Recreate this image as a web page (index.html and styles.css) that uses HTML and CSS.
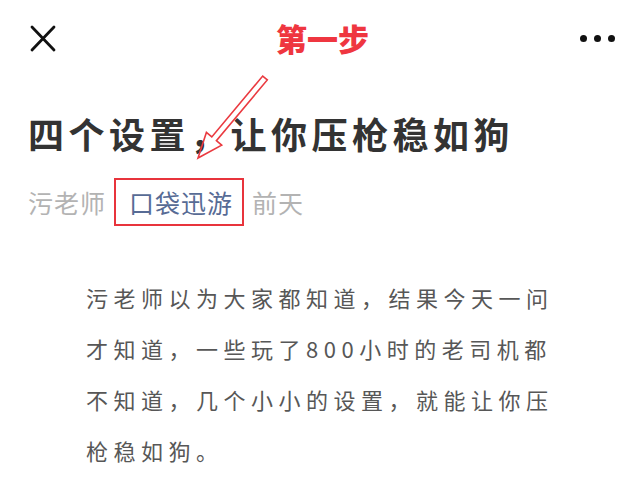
FILE: index.html
```html
<!DOCTYPE html>
<html lang="zh-CN">
<head>
<meta charset="utf-8">
<title>四个设置，让你压枪稳如狗</title>
<link rel="stylesheet" href="styles.css">
</head>
<body>
<div class="page">
  <header class="topbar">
    <div class="close">
      <svg width="26" height="27" viewBox="0 0 26 27" aria-hidden="true">
        <path d="M2 2 L24 25 M24 2 L2 25" stroke="#111" stroke-width="2.8" stroke-linecap="round" fill="none"/>
      </svg>
    </div>
    <div class="step">第一步</div>
    <div class="more"><span class="dot"></span><span class="dot"></span><span class="dot"></span></div>
  </header>
  <article class="article">
    <h1 class="title">四个设置，让你压枪稳如狗</h1>
    <div class="meta">
      <span class="author">污老师</span>
      <span class="account">口袋迅游</span>
      <span class="time">前天</span>
    </div>
    <p class="body-text">污老师以为大家都知道，结果今天一问才知道，一些玩了800小时的老司机都不知道，几个小小的设置，就能让你压枪稳如狗。</p>
  </article>
  <svg class="arrow" width="640" height="499" viewBox="0 0 640 499" aria-hidden="true">
    <polygon points="262.7,76.1 267.3,79.9 216.4,140.7 221.7,145.2 198,158 206.4,132.4 211.8,136.9" fill="none" stroke="#ea3a40" stroke-width="1.6" stroke-linejoin="miter"/>
  </svg>
</div>
</body>
</html>
```

FILE: styles.css
```css
html, body {
  margin: 0;
  padding: 0;
  background: #ffffff;
}
body {
  font-family: "Noto Sans CJK SC", "Noto Sans", sans-serif;
}
.page {
  position: relative;
  width: 640px;
  height: 499px;
  overflow: hidden;
}
.topbar {
  height: 76px;
  display: grid;
  grid-template-columns: 1fr auto 1fr;
  align-items: center;
  padding: 0 25px 0 30px;
}
.close {
  display: flex;
  align-items: center;
  height: 27px;
}
.close svg {
  display: block;
}
.step {
  color: #ef3640;
  font-size: 31px;
  font-weight: 900;
  line-height: 40px;
  letter-spacing: 0;
}
.more {
  display: flex;
  justify-content: flex-end;
  gap: 7px;
}
.dot {
  width: 7px;
  height: 7px;
  border-radius: 50%;
  background: #111;
}
.article {
  padding: 0 28px;
}
.title {
  margin: 33px 0 0 0;
  font-size: 36px;
  line-height: 48px;
  font-weight: 700;
  color: #333333;
  letter-spacing: 4.5px;
}
.meta {
  margin-top: 21px;
  display: flex;
  align-items: center;
  font-size: 25px;
  letter-spacing: 1px;
  height: 48px;
}
.author {
  color: #b3b3b3;
}
.account {
  color: #576b95;
  border: 2px solid #e8343c;
  height: 44px;
  line-height: 44px;
  padding: 0 9px 0 13px;
  margin: 0 8px 0 8px;
}
.time {
  color: #b3b3b3;
}
.body-text {
  margin: 46px 0 0 58px;
  width: 470px;
  font-size: 22px;
  line-height: 51px;
  letter-spacing: 5.5px;
  color: #575757;
}
.arrow {
  position: absolute;
  left: 0;
  top: 0;
  pointer-events: none;
}
```
